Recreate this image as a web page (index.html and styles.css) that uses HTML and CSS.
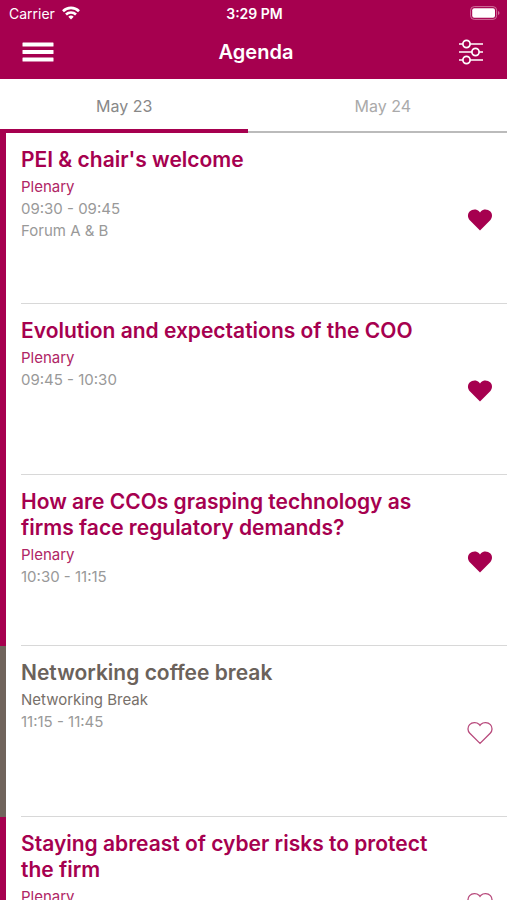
FILE: index.html
```html
<!DOCTYPE html>
<html lang="en">
<head>
    <meta charset="UTF-8">
    <meta name="viewport" content="width=device-width, initial-scale=1.0">
    <title>Agenda</title>
    <link rel="stylesheet" href="styles.css">
</head>
<body>
    <!-- Header -->
    <header class="header">
        <div class="status-bar">
            <div class="status-left">
                <span>Carrier</span>
                <svg width="18" height="14" viewBox="0 0 18 14" fill="none" stroke="#fff" stroke-width="2.6" aria-hidden="true">
                    <path d="M1 5.2a11.4 11.4 0 0 1 16 0"/>
                    <path d="M4 8.5a7.2 7.2 0 0 1 10 0"/>
                    <path d="M9 13.6l-2.7-2.9a3.9 3.9 0 0 1 5.4 0z" fill="#fff" stroke="none"/>
                </svg>
            </div>
            <span class="status-time">3:29 PM</span>
            <div class="status-right">
                <svg width="30" height="14" viewBox="0 0 30 14" aria-hidden="true">
                    <rect x="0.6" y="0.6" width="26" height="12.8" rx="3.6" fill="none" stroke="#d0709c" stroke-width="1"/>
                    <rect x="2.2" y="2.2" width="22.8" height="9.6" rx="2" fill="#fff"/>
                    <path d="M28 5v4q1.5-.6 1.5-2T28 5z" fill="#d0709c"/>
                </svg>
            </div>
        </div>
        <div class="nav-bar">
            <button class="icon-button" type="button" aria-label="Menu">
                <svg width="32" height="20" viewBox="0 0 32 20" fill="#fff" aria-hidden="true">
                    <rect x="0.5" y="0.5" width="31" height="4" rx="0.5"/>
                    <rect x="0.5" y="8" width="31" height="4" rx="0.5"/>
                    <rect x="0.5" y="15.5" width="31" height="4" rx="0.5"/>
                </svg>
            </button>
            <h1>Agenda</h1>
            <button class="icon-button" type="button" aria-label="Filter">
                <svg width="26" height="26" viewBox="0 0 26 26" fill="none" stroke="#fff" stroke-width="1.7" aria-hidden="true">
                    <circle cx="8.5" cy="5" r="3.6"/>
                    <circle cx="17.5" cy="13" r="3.6"/>
                    <circle cx="8.5" cy="21" r="3.6"/>
                    <path d="M1 5h3.9M12.1 5H25M1 13h12.9M21.1 13H25M1 21h3.9M12.1 21H25"/>
                </svg>
            </button>
        </div>
    </header>

    <!-- Days -->
    <nav class="tabs">
        <a class="tab active" href="#may-23" aria-current="page">May 23</a>
        <a class="tab" href="#may-24">May 24</a>
    </nav>

    <!-- Heart icon shared by all sessions -->
    <svg width="0" height="0" class="sprite" aria-hidden="true">
        <symbol id="heart" viewBox="0 0 26 24">
            <path d="M13 22.4L2.8 12.2C.5 9.8.3 6 2.6 3.6 5.2 1 9.6.9 12 3.2l1 1.2 1-1.2C16.4.9 20.8 1 23.4 3.6c2.3 2.4 2.1 6.2-.2 8.6z"/>
        </symbol>
    </svg>

    <!-- Sessions -->
    <main class="agenda" id="may-23">
        <article class="session">
            <div class="session-body">
                <div class="session-text">
                    <h2>PEI &amp; chair's welcome</h2>
                    <p class="type">Plenary</p>
                    <p>09:30 - 09:45</p>
                    <p>Forum A &amp; B</p>
                </div>
                <button class="heart saved" type="button" aria-label="Remove from favourites" aria-pressed="true">
                    <svg width="26" height="24"><use href="#heart"/></svg>
                </button>
            </div>
        </article>

        <article class="session">
            <div class="session-body">
                <div class="session-text">
                    <h2>Evolution and expectations of the COO</h2>
                    <p class="type">Plenary</p>
                    <p>09:45 - 10:30</p>
                </div>
                <button class="heart saved" type="button" aria-label="Remove from favourites" aria-pressed="true">
                    <svg width="26" height="24"><use href="#heart"/></svg>
                </button>
            </div>
        </article>

        <article class="session">
            <div class="session-body">
                <div class="session-text">
                    <h2>How are CCOs grasping technology as firms face regulatory demands?</h2>
                    <p class="type">Plenary</p>
                    <p>10:30 - 11:15</p>
                </div>
                <button class="heart saved" type="button" aria-label="Remove from favourites" aria-pressed="true">
                    <svg width="26" height="24"><use href="#heart"/></svg>
                </button>
            </div>
        </article>

        <article class="session break">
            <div class="session-body">
                <div class="session-text">
                    <h2>Networking coffee break</h2>
                    <p class="type">Networking Break</p>
                    <p>11:15 - 11:45</p>
                </div>
                <button class="heart" type="button" aria-label="Add to favourites" aria-pressed="false">
                    <svg width="26" height="24"><use href="#heart"/></svg>
                </button>
            </div>
        </article>

        <article class="session">
            <div class="session-body">
                <div class="session-text">
                    <h2>Staying abreast of cyber risks to protect the firm</h2>
                    <p class="type">Plenary</p>
                </div>
                <button class="heart" type="button" aria-label="Add to favourites" aria-pressed="false">
                    <svg width="26" height="24"><use href="#heart"/></svg>
                </button>
            </div>
        </article>
    </main>
</body>
</html>
```

FILE: styles.css
```css
/* Base Styles */
* {
    box-sizing: border-box;
}

body {
    display: flex;
    flex-direction: column;
    height: 100vh;
    margin: 0;
    font-family: Inter, "Liberation Sans", sans-serif;
    background-color: #fff;
    color: #999;
}

h1, h2, p {
    margin: 0;
}

button {
    display: flex;
    padding: 0;
    border: none;
    background: none;
    cursor: pointer;
}

.sprite {
    flex: none;
}

/* Header */
.header {
    flex: none;
    background-color: #a6004f;
    color: #fff;
}

.status-bar {
    display: grid;
    grid-template-columns: 1fr auto 1fr;
    align-items: center;
    height: 26px;
    padding: 0 7px 0 9px;
    font-size: 14px;
}

.status-left {
    display: flex;
    align-items: center;
    gap: 7px;
}

.status-time {
    font-weight: 600;
}

.status-right {
    display: flex;
    justify-content: flex-end;
}

.nav-bar {
    display: flex;
    align-items: center;
    justify-content: space-between;
    height: 53px;
    padding: 0 23px 2px 22px;
}

.nav-bar h1 {
    font-size: 20px;
    font-weight: 600;
}

/* Tabs */
.tabs {
    display: flex;
    flex: none;
    height: 54px;
}

.tab {
    flex: 1;
    padding: 17px 0 0 10px;
    border-bottom: 2px solid #bbb;
    font-size: 16px;
    line-height: 20px;
    text-align: center;
    text-decoration: none;
    color: #aaa;
}

.tab.active {
    flex: 0 0 49%;
    padding-left: 0;
    border-bottom: 4px solid #a6004f;
    color: #888;
}

/* Sessions */
.agenda {
    flex: 1;
    min-height: 0;
    overflow-y: auto;
    scrollbar-width: none;
}

.session {
    min-height: 171px;
    padding-left: 15px;
    border-left: 6px solid #a6004f;
}

.session-body {
    display: flex;
    align-items: center;
    justify-content: space-between;
    min-height: 171px;
    padding: 4px 14px 0 0;
    border-bottom: 1px solid #d8d8d8;
}

.session-text {
    align-self: flex-start;
    max-width: 420px;
    padding-top: 10px;
    font-size: 15px;
    line-height: 22px;
}

.session h2 {
    margin-bottom: 3px;
    font-size: 21px;
    font-weight: 600;
    line-height: 26px;
    color: #a6004f;
}

.session .type {
    color: #b02565;
}

/* Breaks */
.break {
    border-left-color: #70645c;
}

.break h2 {
    color: #6b625b;
}

.break .type {
    color: #77706a;
}

/* Favourites */
.heart svg {
    fill: none;
    stroke: #b84a7c;
    stroke-width: 1.3;
}

.heart.saved svg {
    fill: #a6004f;
    stroke: none;
}
```
